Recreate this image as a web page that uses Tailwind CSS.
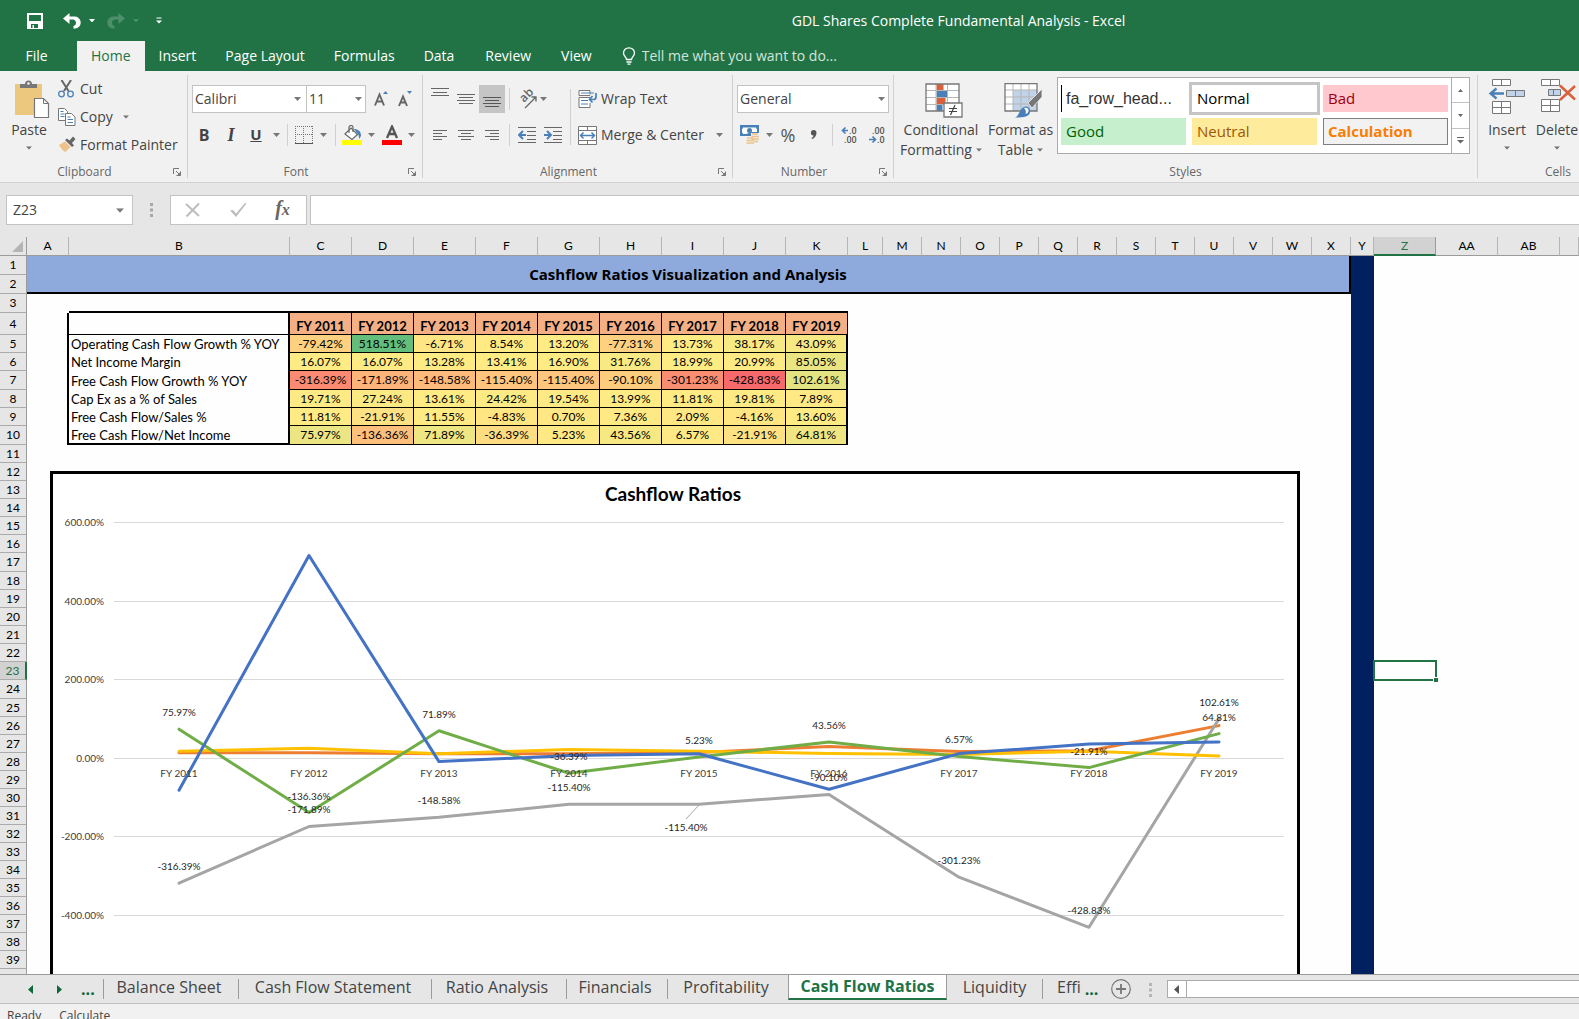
<!DOCTYPE html>
<html lang="en">

<head>
  <meta charset="utf-8" />
  <meta name="viewport" content="width=device-width, initial-scale=1" />
  <title>GDL Shares Complete Fundamental Analysis - Excel</title>
  <script src="https://cdn.jsdelivr.net/npm/@tailwindcss/browser@4"></script>
</head>

<body class="h-screen flex flex-col overflow-hidden bg-[#e6e6e6] font-['Open_Sans',sans-serif] text-sm text-[#444444]">
  <svg class="hidden">
    <symbol id="caret" viewBox="0 0 7 4"><path d="M0 0h7L3.5 4z" fill="currentColor" /></symbol>
    <symbol id="drop" viewBox="0 0 7 4"><path d="M0 0h7L3.5 4z" fill="#777" /></symbol>
    <symbol id="launcher" viewBox="0 0 8 8">
      <path d="M.5 6V.5H6M3 3l3 3M7.5 3.5v4h-4" fill="none" stroke="#777" />
      <path d="M7.5 4v3.500h-3.500z" fill="#777" />
    </symbol>
  </svg>

  <!-- title bar -->
  <header class="bg-[#217346] text-white shrink-0">
    <div class="h-[41px] flex items-center">
      <div class="flex items-center pl-[27px] w-[200px]">
        <button aria-label="Save" class="w-4 h-4"><svg viewBox="0 0 16 16"><path fill-rule="evenodd" fill="#fff" d="M0 0h16v16H0zM2 2v6h12V2zM4 11v4h1.500v-3H7v3h4v-4z" /></svg></button>
        <button aria-label="Undo" class="ml-5 w-[18px] h-4"><svg viewBox="0 0 18 16"><path d="M0 5.500L6.500 0v3.500h4.500a6 5.800 0 0 1 1 12l-1.500.2v-2.600a3.400 3.400 0 0 0 0-6.600H6.500V11z" fill="#fff" /></svg></button>
        <button aria-label="Undo list" class="ml-2 w-[6px]"><svg viewBox="0 0 7 4"><use href="#caret" /></svg></button>
        <button aria-label="Redo" class="ml-3 w-[18px] h-4 text-[#4d8f6b]"><svg viewBox="0 0 18 16"><path d="M18 5.500L11.500 0v3.500H7a6 5.800 0 0 0-1 12l1.500.2v-2.600a3.400 3.400 0 0 1 0-6.600h4V11z" fill="currentColor" /></svg></button>
        <button aria-label="Redo list" class="ml-2 w-[6px] text-[#4d8f6b]"><svg viewBox="0 0 7 4"><use href="#caret" /></svg></button>
        <button aria-label="Customize Quick Access Toolbar" class="ml-[17px] w-[6px]"><svg viewBox="0 0 6 7"><path d="M.5 1h5" stroke="#fff" /><path d="M0 3.500h6L3 6.500z" fill="#fff" /></svg></button>
      </div>
      <h1 class="flex-1 text-center pl-[138px]">GDL Shares Complete Fundamental Analysis - Excel</h1>
    </div>
    <nav class="h-[30px] flex items-center">
      <button class="w-[77px] h-full pr-1">File</button>
      <button class="px-3.5 h-full bg-[#f1f1f1] text-[#217346]">Home</button>
      <button class="pl-3.5 pr-[15px] h-full">Insert</button>
      <button class="pl-3.5 pr-[15px] h-full">Page Layout</button>
      <button class="pl-3.5 pr-[15px] h-full">Formulas</button>
      <button class="pl-3.5 pr-[15px] h-full">Data</button>
      <button class="px-4 h-full">Review</button>
      <button class="px-3.5 h-full">View</button>
      <label for="tellMe" class="ml-4 w-3.5"><svg viewBox="0 0 14 18" fill="none" stroke="#fff" stroke-width="1.300"><path d="M4.500 12.500c0-2.500-3-3.500-3-6.500a5.500 5.200 0 0 1 11 0c0 3-3 4-3 6.500zM4.500 15h5M5.500 17.200h3" /></svg></label>
      <input id="tellMe" type="text" placeholder="Tell me what you want to do..." class="ml-1.5 w-60 bg-transparent outline-none placeholder:text-[#d3e5db]" />
    </nav>
  </header>

  <!-- ribbon -->
  <div class="h-28 shrink-0 flex bg-[#f1f1f1] border-b border-[#d2d2d2] overflow-hidden">
    <section class="w-[188px] shrink-0 my-1 flex flex-col border-r border-[#d0d0d0]">
      <div class="flex-1 flex">
        <button class="w-[54px] pl-1 pt-1 flex flex-col items-center">
          <svg class="w-9 h-10 ml-1.5" viewBox="0 0 36 40"><path d="M1 5h27v31H1z" fill="#ecc87e" /><path d="M6 9V5h5a3 3 0 0 1 7 0h5v4z" fill="#777" /><circle cx="14.500" cy="4.500" r="1.300" fill="#f1f1f1" /><path d="M20.500 19.500h9l5 5v14h-14z" fill="#fff" stroke="#777" stroke-width="1.200" /><path d="M29.500 19.500v5h5" fill="none" stroke="#777" /></svg>
          <span class="leading-5 mt-px">Paste</span>
          <svg class="w-1.5 h-1 mt-1.5" viewBox="0 0 7 4"><use href="#drop" /></svg>
        </button>
        <div class="pl-1 flex flex-col">
          <button class="h-7 flex items-center">
            <svg class="w-[18px] h-[18px] mr-1" viewBox="0 0 18 18"><path d="M3.500 0l7 11M13 0L6 11" stroke="#666" stroke-width="2" fill="none" /><circle cx="3.500" cy="14" r="2.800" fill="none" stroke="#4a80b8" stroke-width="1.300" /><circle cx="12.500" cy="14" r="2.800" fill="none" stroke="#4a80b8" stroke-width="1.300" /></svg>Cut
          </button>
          <button class="h-7 flex items-center">
            <svg class="w-[18px] h-[18px] mr-1" viewBox="0 0 18 18"><path d="M.5.5h6l3 3v9h-9z" fill="#fff" stroke="#777" /><path d="M2.500 3.500h3M2.500 6h4M2.500 8.500h4" stroke="#4a80b8" /><path d="M7.500 5.500h6l3.500 3.500v8.500H7.500z" fill="#fff" stroke="#777" /><path d="M9.500 9h3M9.500 11.500h5.500M9.500 14.500h5.500" stroke="#4a80b8" /></svg>Copy
            <svg class="w-1.5 h-1 ml-2.5" viewBox="0 0 7 4"><use href="#drop" /></svg>
          </button>
          <button class="h-7 flex items-center whitespace-nowrap">
            <svg class="w-[18px] h-[18px] mr-1" viewBox="0 0 18 18"><path d="M1 9l6-3.500 5.500 5.500L7.500 16C5 15 3 12.500 1 9z" fill="#ecc28a" /><path d="M7 4l2-1.500 2.500 2L15 .5 17.500 3 14 7l2 2.500L14 11z" fill="#666" /></svg>Format Painter
          </button>
        </div>
      </div>
      <div class="h-3 flex items-center text-xs text-[#666666]"><span class="flex-1 text-center pr-1">Clipboard</span><button aria-label="Clipboard settings" class="w-2 mr-1.5"><svg viewBox="0 0 8 8"><use href="#launcher" /></svg></button></div>
    </section>

    <section class="w-[235px] shrink-0 my-1 flex flex-col border-r border-[#d0d0d0]">
      <div class="flex-1 pl-1 pt-2.5">
        <div class="flex h-7 items-center">
          <div class="relative">
            <select aria-label="Font" class="appearance-none w-[115px] h-7 pl-0.5 bg-white border border-[#c3c3c3] rounded-none"><option>Calibri</option></select>
            <svg class="absolute right-1.5 top-3 w-[7px] h-1 pointer-events-none" viewBox="0 0 7 4"><use href="#drop" /></svg>
          </div>
          <div class="relative -ml-px">
            <select aria-label="Font size" class="appearance-none w-[60px] h-7 pl-0.5 bg-white border border-[#c3c3c3] rounded-none"><option>11</option></select>
            <svg class="absolute right-1 top-3 w-[7px] h-1 pointer-events-none" viewBox="0 0 7 4"><use href="#drop" /></svg>
          </div>
          <button aria-label="Increase font size" class="ml-1 w-6 flex justify-center"><svg class="w-4 h-[18px]" viewBox="0 0 16 18"><path d="M1 15.500L5.500 4.500 10 15.500M2.700 11.500h5.600" fill="none" stroke="#666" stroke-width="1.900" /><path d="M9 4h5L11.500 1z" fill="#4a80b8" /></svg></button>
          <button aria-label="Decrease font size" class="w-6 flex justify-center"><svg class="w-4 h-[18px]" viewBox="0 0 16 18"><path d="M1 16L5 6.500 9 16M2.500 12.500h5" fill="none" stroke="#666" stroke-width="1.900" /><path d="M9 1h5L11.500 4z" fill="#4a80b8" /></svg></button>
        </div>
        <div class="mt-2 flex h-7 items-center">
          <button class="w-6 font-bold text-base">B</button>
          <button class="w-[26px] pl-1 font-bold italic text-lg font-['Liberation_Serif',serif]">I</button>
          <button class="w-7 font-bold underline text-[15px]">U</button>
          <button aria-label="Underline style" class="w-3 flex justify-center"><svg class="w-[7px] h-1" viewBox="0 0 7 4"><use href="#drop" /></svg></button>
          <span class="ml-[5px] w-px h-[22px] bg-[#d0d0d0]"></span>
          <button aria-label="Borders" class="w-8 flex justify-center"><svg class="w-[18px] h-[18px]" viewBox="0 0 18 18"><path d="M.5 0v17M8.500 0v17M17.500 0v17M0 .5h18M0 8.500h18" stroke="#777" stroke-dasharray="1 1" /><path d="M0 17.500h18" stroke="#555" /></svg></button>
          <button aria-label="Border styles" class="w-2"><svg class="w-[7px] h-1" viewBox="0 0 7 4"><use href="#drop" /></svg></button>
          <span class="ml-[7px] w-px h-[22px] bg-[#d0d0d0]"></span>
          <button aria-label="Fill color" class="w-8 flex justify-center"><svg class="w-5 h-5" viewBox="0 0 20 20"><path d="M3 9l6-6 6.500 6.500-5.500 5z" fill="#fff" stroke="#666" stroke-width="1.200" /><path d="M7 8V2.500a2 2 0 0 1 4 0V7" fill="none" stroke="#666" stroke-width="1.200" /><path d="M12 4c4 0 7 2 7 7l-2 3c0-3-.5-5-2-6z" fill="#4a80b8" /><path d="M0 15h20v5H0z" fill="#ff0" /></svg></button>
          <button aria-label="Fill colors" class="w-2"><svg class="w-[7px] h-1" viewBox="0 0 7 4"><use href="#drop" /></svg></button>
          <button aria-label="Font color" class="w-8 flex justify-center"><svg class="w-5 h-5" viewBox="0 0 20 20"><path d="M5 13L10 1.500 15 13M7 9h6" fill="none" stroke="#555" stroke-width="2.300" /><path d="M0 15h20v5H0z" fill="#f00" /></svg></button>
          <button aria-label="Font colors" class="w-2"><svg class="w-[7px] h-1" viewBox="0 0 7 4"><use href="#drop" /></svg></button>
        </div>
      </div>
      <div class="h-3 flex items-center text-xs text-[#666666]"><span class="flex-1 text-center pr-1">Font</span><button aria-label="Font settings" class="w-2 mr-1.5"><svg viewBox="0 0 8 8"><use href="#launcher" /></svg></button></div>
    </section>

    <section class="w-[310px] shrink-0 my-1 flex flex-col border-r border-[#d0d0d0]">
      <div class="flex-1 pl-1 pt-2.5 flex">
        <div>
          <div class="flex h-7 items-center">
            <button aria-label="Top align" class="w-[26px] h-7 flex justify-center"><svg class="w-[18px] h-[18px]" viewBox="0 0 18 18"><path d="M0 3.500h18M2 7.500h14M0 10.500h18" stroke="#666" /></svg></button>
            <button aria-label="Middle align" class="w-[26px] h-7 flex justify-center items-center"><svg class="w-[18px] h-[18px]" viewBox="0 0 18 18"><path d="M0 4.500h18M2 7.500h14M0 10.500h18M2 13.500h14" stroke="#666" /></svg></button>
            <button aria-label="Bottom align" class="w-[26px] h-7 flex justify-center items-end bg-[#c5c5c5]"><svg class="w-[18px] h-[18px]" viewBox="0 0 18 18"><path d="M0 2.500h18M2 5.500h14M0 8.500h18M2 11.500h14" stroke="#555" /></svg></button>
            <span class="ml-1 w-px h-[22px] bg-[#d0d0d0]"></span>
            <button aria-label="Orientation" class="ml-1 w-[26px] flex justify-center"><svg class="w-6 h-6" viewBox="0 0 24 24"><text transform="translate(9 16) rotate(-45)" font-size="12" font-weight="600" fill="#666">ab</text><path d="M10 21L21 10M16.500 10H21v4.500" fill="none" stroke="#666" stroke-width="1.300" /></svg></button>
            <button aria-label="Orientation list" class="w-2"><svg class="w-[7px] h-1" viewBox="0 0 7 4"><use href="#drop" /></svg></button>
          </div>
          <div class="mt-2 flex h-7 items-center">
            <button aria-label="Align left" class="w-[26px] flex justify-center"><svg class="w-4 h-4" viewBox="0 0 16 16"><path d="M1 3.500h14M1 6.500h9M1 9.500h14M1 12.500h9" stroke="#666" /></svg></button>
            <button aria-label="Center" class="w-[26px] flex justify-center"><svg class="w-4 h-4" viewBox="0 0 16 16"><path d="M0 3.500h16M3 6.500h10M0 9.500h16M3 12.500h10" stroke="#666" /></svg></button>
            <button aria-label="Align right" class="w-[26px] flex justify-center"><svg class="w-4 h-4" viewBox="0 0 16 16"><path d="M1 3.500h14M6 6.500h9M1 9.500h14M6 12.500h9" stroke="#666" /></svg></button>
            <span class="ml-1 w-px h-[22px] bg-[#d0d0d0]"></span>
            <button aria-label="Decrease indent" class="ml-1 w-[26px] flex justify-center"><svg class="w-[18px] h-4" viewBox="0 0 18 16"><path d="M0 .5h18M9 4.500h9M9 8.500h9M9 12.500h9M0 15.500h18" stroke="#666" /><path d="M8 8H2M5 4L1 8l4 4" fill="none" stroke="#4a80b8" stroke-width="2" /></svg></button>
            <button aria-label="Increase indent" class="w-[26px] flex justify-center"><svg class="w-[18px] h-4" viewBox="0 0 18 16"><path d="M0 .5h18M9 4.500h9M9 8.500h9M9 12.500h9M0 15.500h18" stroke="#666" /><path d="M0 8h6M3 4l4 4-4 4" fill="none" stroke="#4a80b8" stroke-width="2" /></svg></button>
          </div>
        </div>
        <span class="ml-1 mt-1 w-px h-14 bg-[#d0d0d0]"></span>
        <div class="pl-[7px]">
          <button class="h-7 flex items-center whitespace-nowrap">
            <svg class="w-[19px] h-[18px] mr-1" viewBox="0 0 19 18"><path d="M12 4.500V.5H1v5h11M12 7.500H1v10h11V13" fill="#fff" stroke="#777" /><path d="M3 3h13M3 10.500h7M3 14h7" stroke="#4a80b8" /><path d="M18 3v4c0 1.500-1 2.500-2.500 2.500H12M14.500 6l-3 3.500 3 3" fill="none" stroke="#4a80b8" stroke-width="1.700" /></svg>Wrap Text
          </button>
          <button class="mt-2 h-7 flex items-center whitespace-nowrap">
            <svg class="w-[19px] h-[19px] mr-1" viewBox="0 0 19 19"><path d="M.5.5h18v18H.5zM.5 4.500h18M.5 14.500h18M9.500 0v4.500M9.500 14.500v4" fill="#fff" stroke="#777" /><path d="M3 9.500h13M5.500 6.500l-3 3 3 3M13.500 6.500l3 3-3 3" fill="none" stroke="#4a80b8" stroke-width="1.500" /></svg>Merge &amp; Center
            <svg class="w-[7px] h-1 ml-3" viewBox="0 0 7 4"><use href="#drop" /></svg>
          </button>
        </div>
      </div>
      <div class="h-3 flex items-center text-xs text-[#666666]"><span class="flex-1 text-center pr-1">Alignment</span><button aria-label="Alignment settings" class="w-2 mr-1.5"><svg viewBox="0 0 8 8"><use href="#launcher" /></svg></button></div>
    </section>

    <section class="w-[161px] shrink-0 my-1 flex flex-col border-r border-[#d0d0d0]">
      <div class="flex-1 pl-1 pt-2.5">
        <div class="relative w-[152px]">
          <select aria-label="Number format" class="appearance-none w-full h-7 pl-0.5 bg-white border border-[#c3c3c3] rounded-none"><option>General</option></select>
          <svg class="absolute right-1 top-3 w-[7px] h-1 pointer-events-none" viewBox="0 0 7 4"><use href="#drop" /></svg>
        </div>
        <div class="mt-2 flex h-7 items-center">
          <button aria-label="Accounting format" class="w-[26px] flex justify-center"><svg class="w-5 h-5" viewBox="0 0 20 20"><path d="M0 0h19v11H0z" fill="#4a80b8" /><path d="M3 2.500h13a1.500 1.500 0 0 0 1 1.500v3h-5l-6 2H3a1.500 1.500 0 0 0-1-1.500V4a1.500 1.500 0 0 0 1-1.500z" fill="#fff" /><circle cx="9.500" cy="5.500" r="2.500" fill="#4a80b8" /><path d="M11 8h8v9h-4v2.500H6V12h5z" fill="#f1f1f1" /><path d="M12 9h6M11.500 11.500H19M11.500 14H19M7 13h6M6.500 15.500H14M14 16.500h4M6.500 18H14" stroke="#ecc28a" stroke-width="1.500" /></svg></button>
          <button aria-label="Accounting formats" class="w-3 flex justify-center"><svg class="w-[7px] h-1" viewBox="0 0 7 4"><use href="#drop" /></svg></button>
          <button class="w-[26px] text-lg text-[#555555]">%</button>
          <button aria-label="Comma style" class="w-[26px] flex justify-center"><svg class="w-2 h-3" viewBox="0 0 8 12"><path d="M6.500 3.500a2.800 2.800 0 1 0-3 3c0 1-.8 2-2 2.500l.5 1c2.500-.8 4.500-3 4.500-6.500z" fill="#555" /></svg></button>
          <span class="ml-[5px] w-px h-[22px] bg-[#d0d0d0]"></span>
          <button aria-label="Increase decimal" class="ml-1 w-[26px] flex justify-center"><svg class="w-5 h-5" viewBox="0 0 20 20" font-family="Roboto" font-size="9" font-weight="500" fill="#555"><text x="9" y="9">.0</text><text x="4" y="18">.00</text><path d="M8 5.500H3M5.500 2.500l-3 3 3 3" fill="none" stroke="#4a80b8" stroke-width="1.700" /></svg></button>
          <button aria-label="Decrease decimal" class="w-[26px] flex justify-center"><svg class="w-5 h-5" viewBox="0 0 20 20" font-family="Roboto" font-size="9" font-weight="500" fill="#555"><text x="6" y="9">.00</text><text x="11" y="18">.0</text><path d="M3 14.500h6M6.500 11.500l3 3-3 3" fill="none" stroke="#4a80b8" stroke-width="1.700" /></svg></button>
        </div>
      </div>
      <div class="h-3 flex items-center text-xs text-[#666666]"><span class="flex-1 text-center pr-1">Number</span><button aria-label="Number settings" class="w-2 mr-1.5"><svg viewBox="0 0 8 8"><use href="#launcher" /></svg></button></div>
    </section>

    <section class="w-[584px] shrink-0 my-1 flex flex-col border-r border-[#d0d0d0]">
      <div class="flex-1 pl-0.5 flex">
        <button class="w-[90px] pt-2 flex flex-col items-center whitespace-nowrap">
          <svg class="w-[38px] h-[35px] ml-1.5" viewBox="0 0 38 35"><path d="M1 1h33v27H1z" fill="#fff" /><path d="M11.500 1h7v6h-7zM11.500 15h9v6h-9z" fill="#d9603b" /><path d="M11.500 8h11v6h-11zM11.500 22h6v6h-6z" fill="#4a80b8" /><path d="M1 7.500h33M1 14.500h33M1 21.500h33M11 1v27M22.500 1v27" stroke="#b5b5b5" /><path d="M1 1h33v27H1z" fill="none" stroke="#777" stroke-width="1.300" /><path d="M19 20h18v14H19z" fill="#fff" stroke="#777" stroke-width="1.300" /><path d="M24 25.500h8M24 28.500h8M30 22l-4.500 10" stroke="#444" stroke-width="1.200" /></svg>
          <span class="leading-5 mt-0.5">Conditional</span>
          <span class="leading-5 flex items-center">Formatting<svg class="w-1.5 h-1 ml-1" viewBox="0 0 7 4"><use href="#drop" /></svg></span>
        </button>
        <button class="w-[69px] pt-2 flex flex-col items-center whitespace-nowrap">
          <svg class="w-[38px] h-[35px] ml-1" viewBox="0 0 38 35"><path d="M1 0h32v28H1z" fill="#fff" /><path d="M9 7h24v21H9z" fill="#c0d3e9" /><path d="M1 7h32M1 14h32M1 21h32M9 0v28M17 0v28M25 0v28" stroke="#b5b5b5" /><path d="M1 .5h32V28H1z" fill="none" stroke="#777" stroke-width="1.300" /><path d="M24 20L38 6v8L28 25z" fill="#777" stroke="#f1f1f1" stroke-width=".8" /><path d="M11 34.500c5-2 4-9 10-11 4 0 6 3 5 6-1 4-6 5-15 5z" fill="#4a80b8" /><path d="M20 25c3-1 5 1 4.500 3.500-.5 1.500-2 2.500-3 2 1-2 0-4-1.500-5.500z" fill="#fff" /></svg>
          <span class="leading-5 mt-0.5">Format as</span>
          <span class="leading-5 flex items-center">Table<svg class="w-1.5 h-1 ml-1" viewBox="0 0 7 4"><use href="#drop" /></svg></span>
        </button>
        <div class="ml-0.5 mt-0.5 w-[413px] h-[77px] flex justify-between border border-[#ababab] bg-white">
          <div class="pl-[3px] pt-[7px] grid grid-cols-[125px_125px_125px] grid-rows-[27px_27px] gap-1.5 text-[15px] leading-[27px]">
            <button class="pl-1 text-left text-base border-l border-black text-[#333333] font-['Liberation_Sans',sans-serif]">fa_row_head...</button>
            <button class="pl-[5px] text-left text-black ring-3 ring-[#c5c5c5]">Normal</button>
            <button class="pl-[5px] text-left bg-[#ffc7ce] text-[#9c0006]">Bad</button>
            <button class="pl-[5px] text-left bg-[#c6efce] text-[#006100]">Good</button>
            <button class="pl-[5px] text-left bg-[#ffeb9c] text-[#9c5700]">Neutral</button>
            <button class="pl-1 text-left leading-[25px] bg-[#f2f2f2] text-[#fa7d00] font-bold border border-[#7f7f7f]">Calculation</button>
          </div>
          <div class="w-[18px] flex flex-col border-l border-[#ababab] text-[#666666]">
            <button aria-label="Scroll styles up" class="flex-1 flex items-center justify-center"><svg class="w-[5px] h-[3px] rotate-180" viewBox="0 0 7 4"><use href="#caret" /></svg></button>
            <button aria-label="Scroll styles down" class="flex-1 flex items-center justify-center border-y border-[#c3c3c3]"><svg class="w-[5px] h-[3px]" viewBox="0 0 7 4"><use href="#caret" /></svg></button>
            <button aria-label="More styles" class="flex-1 flex items-center justify-center"><svg class="w-[7px] h-[7px]" viewBox="0 0 7 7"><path d="M0 .5h7" stroke="#666" /><path d="M0 3h7L3.500 6.500z" fill="#666" /></svg></button>
          </div>
        </div>
      </div>
      <div class="h-3 text-center text-xs leading-3 text-[#666666]">Styles</div>
    </section>

    <section class="w-[160px] shrink-0 my-1 flex flex-col">
      <div class="flex-1 pl-1 flex">
        <button class="w-[50px] pt-1 flex flex-col items-center">
          <svg class="w-[38px] h-[35px]" viewBox="0 0 38 35"><path d="M4.500.5h18v6h-18zM13.500.5v6M4.500 22.500h18v12h-18zM4.500 28.500h18M13.500 22.500v12" fill="#fff" stroke="#777" /><path d="M18.500 11.500h18v6h-18zM27.500 11.500v6" fill="#c0d3e9" stroke="#777" /><path d="M16 14.500H4M8.500 9.500l-6 5 6 5" fill="none" stroke="#4a80b8" stroke-width="2.300" /></svg>
          <span class="leading-5 mt-1.5">Insert</span>
          <svg class="w-1.5 h-1 mt-1.5" viewBox="0 0 7 4"><use href="#drop" /></svg>
        </button>
        <button class="w-[50px] pt-1 flex flex-col items-center">
          <svg class="w-[38px] h-[35px]" viewBox="0 0 38 35"><path d="M3.500.5h18v6h-18zM12.500.5v6M3.500 20.500h18v12h-18zM3.500 26.500h18M12.500 20.500v12" fill="#fff" stroke="#777" /><path d="M10.500 10.500h12v6h-12zM15.500 10.500v6" fill="#c0d3e9" stroke="#777" /><path d="M22 6.500l15 14M37 7L22 21" fill="none" stroke="#d9603b" stroke-width="2.500" /></svg>
          <span class="leading-5 mt-1.5">Delete</span>
          <svg class="w-1.5 h-1 mt-1.5" viewBox="0 0 7 4"><use href="#drop" /></svg>
        </button>
      </div>
      <div class="h-3 text-center text-xs leading-3 text-[#666666]">Cells</div>
    </section>
  </div>

  <!-- formula bar -->
  <div class="h-[54px] shrink-0 pt-3 pl-1.5 flex items-start">
    <div class="w-[127px] h-[30px] flex items-center bg-white border border-[#c3c3c3]">
      <input aria-label="Name box" type="text" value="Z23" class="w-[105px] pl-1.5 outline-none" />
      <button aria-label="Named ranges"><svg class="w-2 h-[5px] ml-1" viewBox="0 0 7 4"><use href="#drop" /></svg></button>
    </div>
    <svg class="ml-[17px] mt-2 w-[3px] h-[14px]" viewBox="0 0 3 14"><path d="M0 0h3v3H0zM0 5.500h3v3H0zM0 11h3v3H0z" fill="#a8a8a8" /></svg>
    <div class="ml-[17px] w-[137px] h-[30px] flex items-center bg-white border border-[#c3c3c3]">
      <button aria-label="Cancel" class="w-[43px] flex justify-center"><svg class="w-4 h-4" viewBox="0 0 16 16"><path d="M1 2l13 12M14 1.500L1.500 14.500" stroke="#bdbdbd" stroke-width="2" /></svg></button>
      <button aria-label="Enter" class="w-[47px] flex justify-center"><svg class="w-[18px] h-4" viewBox="0 0 18 16"><path d="M1 8.500L4 8l3 3.500L16 1l1.500.5L7 15z" fill="#bdbdbd" /></svg></button>
      <button aria-label="Insert function" class="w-[43px] font-['Liberation_Serif',serif] italic font-bold text-xl leading-5 text-[#666666]">f<span class="text-base">x</span></button>
    </div>
    <input aria-label="Formula bar" type="text" class="ml-[3px] flex-1 h-[30px] bg-white border border-r-0 border-[#c3c3c3] outline-none" />
  </div>

  <!-- sheet -->
  <main class="relative flex-1 min-h-0 overflow-hidden bg-[#fefefe] border-b border-[#9b9b9b]">
    <table class="table-fixed w-full border-separate border-spacing-0 font-['Lato',sans-serif] text-xs leading-4 text-black">
      <colgroup id="cols"></colgroup>
      <thead>
        <tr id="letters"></tr>
      </thead>
      <tbody id="rows"></tbody>
    </table>

    <div class="absolute left-[50px] top-[234px] w-[1250px] h-[620px] bg-white border-3 border-black">
      <svg id="chart" class="w-[1244px] h-[600px] font-['Lato',sans-serif]" viewBox="0 0 1244 600"></svg>
    </div>
  </main>

  <!-- sheet tabs -->
  <div class="h-[29px] shrink-0 flex items-stretch text-base leading-5 border-b border-[#c0c0c0]">
    <div class="w-[103px] flex items-center text-[#0e6839]">
      <button aria-label="Previous sheet" class="ml-7"><svg class="w-[5px] h-[9px]" viewBox="0 0 5 9"><path d="M5 0v9L0 4.500z" fill="#0e6839" /></svg></button>
      <button aria-label="Next sheet" class="ml-6"><svg class="w-[5px] h-[9px]" viewBox="0 0 5 9"><path d="M0 0v9l5-4.500z" fill="#0e6839" /></svg></button>
      <button class="ml-[19px] font-bold">...</button>
    </div>
    <button class="my-1 pb-2 pr-1 w-[135px] border-l border-[#9b9b9b] whitespace-nowrap leading-4">Balance Sheet</button>
    <button class="my-1 pb-2 pr-1 w-[193px] border-l border-[#9b9b9b] whitespace-nowrap leading-4">Cash Flow Statement</button>
    <button class="my-1 pb-2 pr-1 w-[135px] border-l border-[#9b9b9b] whitespace-nowrap leading-4">Ratio Analysis</button>
    <button class="my-1 pb-2 pr-1 w-[101px] border-l border-[#9b9b9b] whitespace-nowrap leading-4">Financials</button>
    <button class="my-1 pb-2 pr-1 w-[121px] border-l border-[#9b9b9b] whitespace-nowrap leading-4">Profitability</button>
    <button class="-mt-px mb-[3px] w-[159px] bg-white border-x border-x-[#9b9b9b] border-b-2 border-b-[#217346] text-[#217346] font-bold whitespace-nowrap">Cash Flow Ratios</button>
    <button class="my-1 pb-2 w-[95px] whitespace-nowrap leading-4">Liquidity</button>
    <button class="my-1 pb-2 pl-3.5 border-l border-[#9b9b9b] leading-4">Effi</button>
    <button class="pl-1 w-[30px] text-left font-bold text-[#0e6839]">...</button>
    <button aria-label="New sheet"><svg class="w-5 h-5" viewBox="0 0 20 20"><circle cx="10" cy="10" r="9.300" fill="none" stroke="#777" stroke-width="1.200" /><path d="M10 5v10M5 10h10" stroke="#777" stroke-width="1.800" /></svg></button>
    <svg class="ml-[18px] mt-2 w-[3px] h-[14px]" viewBox="0 0 3 14"><path d="M0 0h3v3H0zM0 5.500h3v3H0zM0 11h3v3H0z" fill="#b5b5b5" /></svg>
    <button aria-label="Scroll left" class="ml-[15px] my-[5px] w-5 flex items-center justify-center bg-white border border-[#ababab]"><svg class="w-[5px] h-[9px]" viewBox="0 0 5 9"><path d="M5 0v9L0 4.500z" fill="#555" /></svg></button>
    <div class="-ml-px my-[5px] flex-1 bg-white border border-r-0 border-[#ababab]"></div>
  </div>

  <!-- status bar -->
  <footer class="h-[15px] shrink-0 overflow-hidden bg-[#f1f1f1] flex gap-[18px] pl-[7px] text-xs leading-6"><span>Ready</span><span>Calculate</span></footer>

  <script>
    var columns = [["A", 42], ["B", 221]];
    "CDEFGHIJK".split("").forEach((l) => columns.push([l, 62]));
    columns.push(["L", 35]);
    "MNOPQRSTUVWX".split("").forEach((l) => columns.push([l, 39]));
    columns.push(["Y", 23], ["Z", 62], ["AA", 62], ["AB", 62], ["", 0]);

    var years = ["FY 2011", "FY 2012", "FY 2013", "FY 2014", "FY 2015", "FY 2016", "FY 2017", "FY 2018", "FY 2019"];
    var ratios = [
      ["Operating Cash Flow Growth % YOY", [-79.42, 518.51, -6.71, 8.54, 13.2, -77.31, 13.73, 38.17, 43.09]],
      ["Net Income Margin", [16.07, 16.07, 13.28, 13.41, 16.9, 31.76, 18.99, 20.99, 85.05]],
      ["Free Cash Flow Growth % YOY", [-316.39, -171.89, -148.58, -115.4, -115.4, -90.1, -301.23, -428.83, 102.61]],
      ["Cap Ex as a % of Sales", [19.71, 27.24, 13.61, 24.42, 19.54, 13.99, 11.81, 19.81, 7.89]],
      ["Free Cash Flow/Sales %", [11.81, -21.91, 11.55, -4.83, 0.7, 7.36, 2.09, -4.16, 13.6]],
      ["Free Cash Flow/Net Income", [75.97, -136.36, 71.89, -36.39, 5.23, 43.56, 6.57, -21.91, 64.81]],
    ];
    var tallRows = [1, 2, 3, 7, 10, 17, 24];

    // red - yellow - green color scale around the median
    function scaleColor(v) {
      var low = [248, 105, 107], mid = [255, 235, 132], high = [99, 190, 123];
      var t = v < 13.6 ? (13.6 - v) / 442.43 : (v - 13.6) / 504.91;
      var end = v < 13.6 ? low : high;
      return "rgb(" + mid.map((m, i) => Math.round(m + (end[i] - m) * t)).join(",") + ")";
    }

    function percent(v) {
      return v.toFixed(2) + "%";
    }

    function buildSheet() {
      document.getElementById("cols").innerHTML = '<col style="width:27px">' +
        columns.map((c) => (c[1] ? `<col style="width:${c[1]}px">` : "<col>")).join("");

      document.getElementById("letters").innerHTML =
        '<th class="h-[19px] p-0 bg-[#e6e6e6] border-r border-b border-[#9b9b9b]"><svg class="w-[11px] h-[11px] ml-3" viewBox="0 0 11 11"><path d="M11 0v11H0z" fill="#b4b4b4"/></svg></th>' +
        columns.map((c) => c[0] == "Z"
          ? '<th class="h-[19px] p-0 font-normal bg-[#d2d2d2] text-[#217346] border-r border-r-[#9b9b9b] border-b-2 border-b-[#217346]">Z</th>'
          : `<th class="h-[19px] p-0 font-normal bg-[#e6e6e6] border-r border-b border-r-[#b5b5b5] border-b-[#9b9b9b]">${c[0]}</th>`).join("");

      var html = "";
      for (var r = 1; r <= 40; r++) {
        var height = r == 4 ? 22 : tallRows.includes(r) ? 19 : 18;
        html += `<tr style="height:${height}px">`;
        html += r == 23
          ? '<th class="p-0 font-normal bg-[#d2d2d2] text-[#217346] border-b border-b-[#ababab] border-r-2 border-r-[#217346]">23</th>'
          : `<th class="p-0 font-normal bg-[#e6e6e6] border-r border-b border-r-[#9b9b9b] border-b-[#ababab]">${r}</th>`;
        if (r == 1) {
          html += `<td colspan="24" rowspan="2" class="p-0 text-center font-bold font-['Open_Sans',sans-serif] text-[15px] bg-[#8ea9db] border-r-2 border-b-2 border-black">Cashflow Ratios Visualization and Analysis</td>`;
        } else if (r == 3) {
          html += '<td></td><td colspan="10" class="p-0 border-b-2 border-black"></td><td colspan="13"></td>';
        } else if (r == 4) {
          html += '<td class="p-0 border-r-2 border-black"></td><td class="p-0 border-r-2 border-b border-black"></td>';
          years.forEach((y) => {
            html += `<th class="p-0 align-bottom font-bold text-[13px] bg-[#f4b084] border-r border-b border-black">${y}</th>`;
          });
          html += '<td colspan="13"></td>';
        } else if (r >= 5 && r <= 10) {
          var row = ratios[r - 5];
          html += '<td class="p-0 border-r-2 border-black"></td>';
          html += r == 10
            ? `<td class="p-0 pl-0.5 text-[13px] whitespace-nowrap border-r-2 border-b-2 border-black">${row[0]}</td>`
            : `<td class="p-0 pl-0.5 text-[13px] whitespace-nowrap border-r-2 border-black">${row[0]}</td>`;
          row[1].forEach((v, i) => {
            html += i == 8
              ? `<td class="p-0 text-center border-r-2 border-b border-black" style="background:${scaleColor(v)}">${percent(v)}</td>`
              : `<td class="p-0 text-center border-r border-b border-black" style="background:${scaleColor(v)}">${percent(v)}</td>`;
          });
          html += '<td colspan="13"></td>';
        } else if (r > 2) {
          html += '<td colspan="24"></td>';
        }
        if (r == 1) html += '<td rowspan="40" class="bg-[#002060]"></td>';
        html += r == 23
          ? '<td class="relative p-0"><div class="absolute -inset-x-px -top-0.5 -bottom-px border-2 border-[#217346]"></div><div class="absolute -right-0.5 -bottom-0.5 w-[5px] h-[5px] bg-[#217346] border-t border-l border-white"></div></td>'
          : "<td></td>";
        html += '<td colspan="3"></td></tr>';
      }
      document.getElementById("rows").innerHTML = html;
    }

    function buildChart() {
      var left = 61, right = 1231, zero = 284, unit = 0.3925;
      var x = (i) => left + 65 + i * 130;
      var y = (v) => zero - v * unit;
      var svg = '<text x="620" y="27" text-anchor="middle" font-size="19" font-weight="700" fill="#000">Cashflow Ratios</text>';

      [600, 400, 200, 0, -200, -400].forEach((v) => {
        var gy = Math.floor(y(v)) + 0.5;
        svg += `<path d="M${left} ${gy}H${right}" stroke="#d9d9d9"/>`;
        svg += `<text x="51" y="${gy + 3}" text-anchor="end" font-size="10" fill="#404040">${percent(v)}</text>`;
      });

      // drawn back to front
      [[1, "#ed7d31"], [2, "#a5a5a5"], [3, "#ffc000"], [5, "#70ad47"], [0, "#4472c4"]].forEach((s) => {
        var points = ratios[s[0]][1].map((v, i) => x(i) + "," + (y(v) + 1).toFixed(1)).join(" ");
        svg += `<polyline points="${points}" fill="none" stroke="${s[1]}" stroke-width="3" stroke-linecap="round" stroke-linejoin="round"/>`;
      });
      svg += '<path d="M646 331L633 345" stroke="#a6a6a6"/>';

      years.forEach((name, i) => {
        svg += `<text x="${x(i)}" y="303" text-anchor="middle" font-size="10" fill="#404040">${name}</text>`;
        [2, 5].forEach((s) => {
          var v = ratios[s][1][i];
          var moved = s == 2 && i == 4;
          svg += `<text x="${moved ? 633 : x(i)}" y="${moved ? 357 : Math.round(y(v)) - 12}" text-anchor="middle" font-size="10" fill="#262626">${percent(v)}</text>`;
        });
      });
      document.getElementById("chart").innerHTML = svg;
    }

    buildSheet();
    buildChart();
  </script>
</body>

</html>
